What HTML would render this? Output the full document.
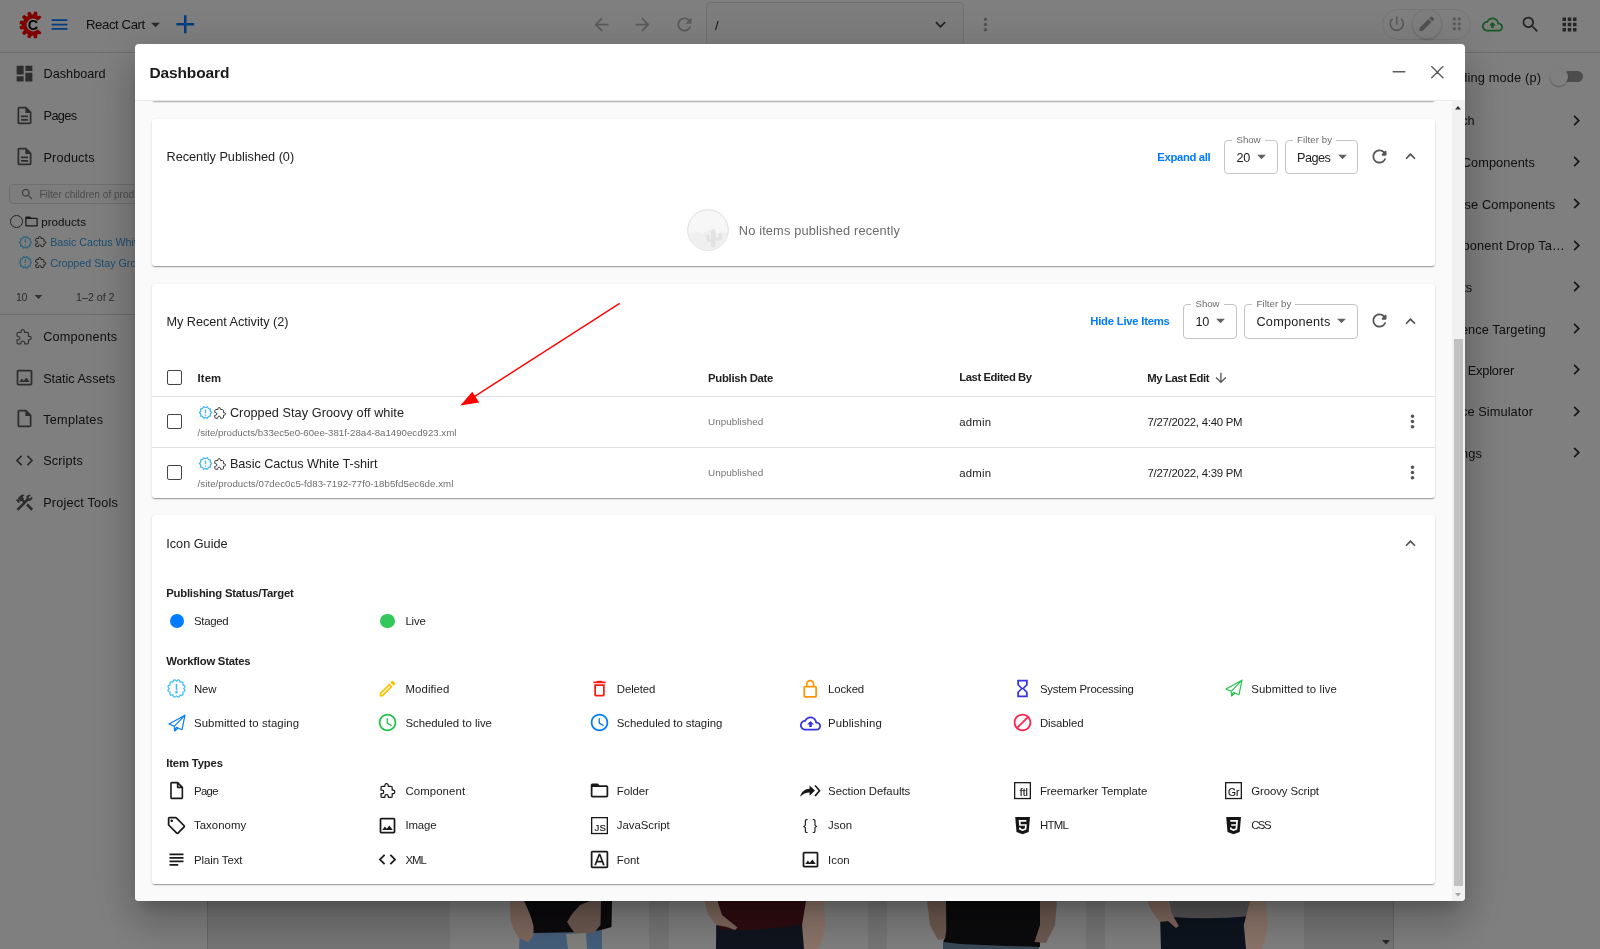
<!DOCTYPE html>
<html lang="en">
<head>
<meta charset="utf-8">
<title>Dashboard</title>
<style>
*{box-sizing:border-box}
html,body{margin:0;padding:0}
body{width:1600px;height:949px;overflow:hidden;position:relative;background:#fff;font-family:"Liberation Sans",sans-serif;color:#212121;font-size:13px}
.abs{position:absolute}
.t{position:absolute;white-space:nowrap;line-height:1;color:#212121}
svg{display:block;position:absolute;overflow:visible}
#app{position:absolute;left:0;top:0;width:1600px;height:949px;background:#fff;overflow:hidden;will-change:transform}
#overlay{position:absolute;left:0;top:0;width:1600px;height:949px;background:rgba(0,0,0,.5)}
#photos{position:absolute;left:0;top:901px;width:1600px;height:48px;overflow:hidden}
#dlg{position:absolute;left:135px;top:44px;width:1330px;height:857px;background:#fff;border-radius:4px;overflow:hidden;
box-shadow:0 11px 15px -7px rgba(0,0,0,.2),0 24px 38px 3px rgba(0,0,0,.14),0 9px 46px 8px rgba(0,0,0,.12)}
#dlgin{position:absolute;left:-135px;top:-44px;width:1600px;height:949px;will-change:transform}
#dlgbody{position:absolute;left:135px;top:100px;width:1330px;height:801px;background:#fafafa;border-top:1px solid #e8e8e8}
.card{position:absolute;left:152px;width:1283px;background:#fff;border-radius:3px;box-shadow:0 2px 1px -1px rgba(0,0,0,.2),0 1px 1px 0 rgba(0,0,0,.14),0 1px 3px 0 rgba(0,0,0,.12)}
.hl{position:absolute;left:152px;width:1283px;height:1px;background:#e0e0e0}
.cb{position:absolute;width:15.2px;height:15.2px;border:1.6px solid #454545;border-radius:2px;background:#fff}
.sel{position:absolute;border:1px solid #c4c4c4;border-radius:4px;background:#fff}
.lbl{background:#fff;padding:0 4px;color:#666}
</style>
</head>
<body>
<div id="app">
<div class="abs" style="left:0.0px;top:0.0px;width:1600.0px;height:52.5px;background:#fff;border-bottom:1px solid #dcdcdc"></div>
<svg width="40" height="40" viewBox="-20 -20 40 40" style="left:13.0px;top:4.5px"><path fill="#ff0000" d="M7.61 7.09 A10.4 10.4 0 1 1 7.61 -7.09 L4.68 -4.36 A6.4 6.4 0 1 0 4.68 4.36 Z"/><path fill="#ff0000" transform="rotate(78)" d="M9.4 -2.300 L13.5 -1.500 L13.5 1.500 L9.4 2.300 Z"/><path fill="#ff0000" transform="rotate(108)" d="M9.4 -2.300 L13.5 -1.500 L13.5 1.500 L9.4 2.300 Z"/><path fill="#ff0000" transform="rotate(138)" d="M9.4 -2.300 L13.5 -1.500 L13.5 1.500 L9.4 2.300 Z"/><path fill="#ff0000" transform="rotate(168)" d="M9.4 -2.300 L13.5 -1.500 L13.5 1.500 L9.4 2.300 Z"/><path fill="#ff0000" transform="rotate(192)" d="M9.4 -2.300 L13.5 -1.500 L13.5 1.500 L9.4 2.300 Z"/><path fill="#ff0000" transform="rotate(222)" d="M9.4 -2.300 L13.5 -1.500 L13.5 1.500 L9.4 2.300 Z"/><path fill="#ff0000" transform="rotate(252)" d="M9.4 -2.300 L13.5 -1.500 L13.5 1.500 L9.4 2.300 Z"/><path fill="#ff0000" transform="rotate(282)" d="M9.4 -2.300 L13.5 -1.500 L13.5 1.500 L9.4 2.300 Z"/><path fill="#ff0000" transform="rotate(43)" d="M8.4 0 L11.9 0 L11.200000000000001 2.500 L8.4 3 Z"/><path fill="#ff0000" transform="rotate(-43)" d="M8.4 0 L11.9 0 L11.200000000000001 -2.500 L8.4 -3 Z"/><text x="-0.100" y="4.700" text-anchor="middle" font-family="Liberation Sans, sans-serif" font-weight="700" font-size="14.400" fill="#000">C</text></svg>
<svg viewBox="0 0 24 24" width="21" height="21" style="left:49.1px;top:13.6px;fill:#007aff;"><path d="M3 18h18v-2H3v2zm0-5h18v-2H3v2zm0-7v2h18V6H3z"/></svg>
<div class="t" style="left:86.0px;top:18.2px;font-size:13.20px;letter-spacing:-0.419px;">React Cart</div>
<svg viewBox="0 0 24 24" width="21" height="21" style="left:145.3px;top:14.0px;fill:#555;"><path d="M7 10l5 5 5-5z"/></svg>
<svg viewBox="0 0 24 24" width="30.5" height="30.5" style="left:170.4px;top:9.4px;fill:#007aff;"><path d="M19 13h-6v6h-2v-6H5v-2h6V5h2v6h6v2z"/></svg>
<svg viewBox="0 0 24 24" width="21" height="21" style="left:590.5px;top:13.9px;fill:#b5b5b5;"><path d="M20 11H7.83l5.59-5.59L12 4l-8 8 8 8 1.41-1.41L7.83 13H20v-2z"/></svg>
<svg viewBox="0 0 24 24" width="21" height="21" style="left:631.7px;top:13.9px;fill:#b5b5b5;"><path d="M12 4l-1.41 1.41L16.17 11H4v2h12.17l-5.58 5.59L12 20l8-8z"/></svg>
<svg viewBox="0 0 24 24" width="21" height="21" style="left:673.7px;top:13.9px;fill:#b5b5b5;"><path d="M17.65 6.35C16.2 4.9 14.21 4 12 4c-4.42 0-7.99 3.58-7.99 8s3.57 8 7.99 8c3.73 0 6.84-2.55 7.73-6h-2.08c-.82 2.33-3.04 4-5.65 4-3.31 0-6-2.69-6-6s2.69-6 6-6c1.66 0 3.14.69 4.22 1.78L13 11h7V4l-2.35 2.35z"/></svg>
<div class="abs" style="left:705.6px;top:1.5px;width:258.7px;height:58.5px;border:1px solid #e2e2e2;border-radius:4px;background:#fbfbfb"></div>
<div class="t" style="left:715.0px;top:18.6px;font-size:13.00px;letter-spacing:0.088px;">/</div>
<svg viewBox="0 0 24 24" width="21" height="21" style="left:930.3px;top:13.9px;fill:#4a4a4a;"><path d="M16.59 8.59L12 13.17 7.41 8.59 6 10l6 6 6-6z"/></svg>
<svg viewBox="0 0 24 24" width="21" height="21" style="left:974.5px;top:13.8px;fill:#a6a6a6;"><path d="M12 8c1.1 0 2-.9 2-2s-.9-2-2-2-2 .9-2 2 .9 2 2 2zm0 2c-1.1 0-2 .9-2 2s.9 2 2 2 2-.9 2-2-.9-2-2-2zm0 6c-1.1 0-2 .9-2 2s.9 2 2 2 2-.9 2-2-.9-2-2-2z"/></svg>
<div class="abs" style="left:1382.2px;top:8.8px;width:89.1px;height:30.9px;border:1px solid #eaeaea;border-radius:16px;background:#fff"></div>
<svg viewBox="0 0 24 24" width="19.5" height="19.5" style="left:1387.2px;top:14.2px;fill:#b2b2b2;"><path d="M13 3h-2v10h2V3zm4.83 2.17l-1.42 1.42C17.99 7.86 19 9.81 19 12c0 3.870-3.130 7-7 7s-7-3.130-7-7c0-2.190 1.010-4.140 2.580-5.420L6.170 5.170C4.230 6.820 3 9.260 3 12c0 4.970 4.030 9 9 9s9-4.030 9-9c0-2.740-1.230-5.180-3.170-6.830z"/></svg>
<div class="abs" style="left:1411.5px;top:9.0px;width:30.0px;height:30.4px;border:1px solid #ececec;border-radius:50%;background:#fdfdfd;box-shadow:0 1px 2px rgba(0,0,0,.18)"></div>
<svg viewBox="0 0 24 24" width="19.5" height="19.5" style="left:1416.8px;top:14.2px;fill:#a2a2a2;"><path d="M3 17.25V21h3.750L17.81 9.94l-3.750-3.750L3 17.250zM20.710 7.040c.390-.390.390-1.020 0-1.410l-2.340-2.340c-.390-.390-1.020-.390-1.410 0l-1.830 1.830 3.750 3.750 1.830-1.830z"/></svg>
<svg viewBox="0 0 24 24" width="19.5" height="19.5" style="left:1446.5px;top:14.2px;fill:#b6b6b6;"><path d="M11 18c0 1.1-.9 2-2 2s-2-.9-2-2 .9-2 2-2 2 .9 2 2zm-2-8c-1.1 0-2 .9-2 2s.9 2 2 2 2-.9 2-2-.9-2-2-2zm0-6c-1.1 0-2 .9-2 2s.9 2 2 2 2-.9 2-2-.9-2-2-2zm6 4c1.1 0 2-.9 2-2s-.9-2-2-2-2 .9-2 2 .9 2 2 2zm0 2c-1.1 0-2 .9-2 2s.9 2 2 2 2-.9 2-2-.9-2-2-2zm0 6c-1.1 0-2 .9-2 2s.9 2 2 2 2-.9 2-2-.9-2-2-2z"/></svg>
<svg viewBox="0 0 24 24" width="21" height="21" style="left:1482.0px;top:13.5px;fill:#2fb24a;"><path d="M19.35 10.04C18.67 6.59 15.64 4 12 4 9.11 4 6.6 5.64 5.35 8.04 2.34 8.36 0 10.91 0 14c0 3.31 2.69 6 6 6h13c2.76 0 5-2.24 5-5 0-2.64-2.05-4.78-4.65-4.96zM19 18H6c-2.21 0-4-1.79-4-4 0-2.05 1.53-3.76 3.56-3.97l1.07-.11.5-.95C8.08 7.14 9.94 6 12 6c2.620 0 4.880 1.860 5.390 4.430l.3 1.5 1.530.110c1.560.1 2.780 1.410 2.780 2.960 0 1.650-1.350 3-3 3zM8 13h2.550v3h2.900v-3H16l-4-4z"/></svg>
<svg viewBox="0 0 24 24" width="21" height="21" style="left:1520.0px;top:13.7px;fill:#4a4a4a;"><path d="M15.5 14h-.79l-.28-.27C15.41 12.59 16 11.11 16 9.5 16 5.91 13.09 3 9.5 3S3 5.91 3 9.5 5.91 16 9.5 16c1.61 0 3.09-.59 4.23-1.57l.27.28v.79l5 4.99L20.49 19l-4.99-5zm-6 0C7.01 14 5 11.99 5 9.5S7.01 5 9.5 5 14 7.01 14 9.5 11.99 14 9.5 14z"/></svg>
<svg viewBox="0 0 24 24" width="21" height="21" style="left:1558.5px;top:13.7px;fill:#4a4a4a;"><path d="M4 8h4V4H4v4zm6 12h4v-4h-4v4zm-6 0h4v-4H4v4zm0-6h4v-4H4v4zm6 0h4v-4h-4v4zm6-10v4h4V4h-4zm-6 4h4V4h-4v4zm6 6h4v-4h-4v4zm0 6h4v-4h-4v4z"/></svg>
<div class="abs" style="left:0.0px;top:53.0px;width:208.0px;height:896.0px;background:#fff;border-right:1px solid #d2d2d2"></div>
<svg viewBox="0 0 24 24" width="21" height="21" style="left:13.7px;top:63.2px;fill:#5a5a5a;"><path d="M3 13h8V3H3v10zm0 8h8v-6H3v6zm10 0h8V11h-8v10zm0-18v6h8V3h-8z"/></svg>
<div class="t" style="left:43.5px;top:68.4px;font-size:12.70px;letter-spacing:0.008px;">Dashboard</div>
<svg viewBox="0 0 24 24" width="21" height="21" style="left:13.7px;top:104.6px;fill:#5a5a5a;"><path d="M8 16h8v2H8zm0-4h8v2H8zm6-10H6c-1.1 0-2 .9-2 2v16c0 1.1.89 2 1.99 2H18c1.1 0 2-.9 2-2V8l-6-6zm4 18H6V4h7v5h5v11z"/></svg>
<div class="t" style="left:43.5px;top:109.8px;font-size:12.70px;letter-spacing:-0.582px;">Pages</div>
<svg viewBox="0 0 24 24" width="21" height="21" style="left:13.7px;top:146.4px;fill:#5a5a5a;"><path d="M8 16h8v2H8zm0-4h8v2H8zm6-10H6c-1.1 0-2 .9-2 2v16c0 1.1.89 2 1.99 2H18c1.1 0 2-.9 2-2V8l-6-6zm4 18H6V4h7v5h5v11z"/></svg>
<div class="t" style="left:43.5px;top:151.6px;font-size:12.70px;letter-spacing:0.148px;">Products</div>
<div class="abs" style="left:8.8px;top:184.0px;width:206.2px;height:20.4px;border:1px solid #dedede;border-radius:4px;background:#fbfbfb"></div>
<svg viewBox="0 0 24 24" width="14.5" height="14.5" style="left:20.1px;top:187.2px;fill:#7c7c7c;"><path d="M15.5 14h-.79l-.28-.27C15.41 12.59 16 11.11 16 9.5 16 5.91 13.09 3 9.5 3S3 5.91 3 9.5 5.91 16 9.5 16c1.61 0 3.09-.59 4.23-1.57l.27.28v.79l5 4.99L20.49 19l-4.99-5zm-6 0C7.01 14 5 11.99 5 9.5S7.01 5 9.5 5 14 7.01 14 9.5 11.99 14 9.5 14z"/></svg>
<div class="t" style="left:39.4px;top:189.5px;font-size:10.10px;color:#9a9a9a;">Filter children of products</div>
<div class="abs" style="left:9.8px;top:215.3px;width:12.8px;height:12.8px;border:1.2px solid #444;border-radius:50%"></div>
<svg viewBox="0 0 24 24" width="15" height="15" style="left:23.9px;top:214.3px;fill:#333;"><path d="M20 6h-8l-2-2H4c-1.1 0-1.99.9-1.99 2L2 18c0 1.1.9 2 2 2h16c1.1 0 2-.9 2-2V8c0-1.1-.9-2-2-2zm0 12H4V8h16v10z"/></svg>
<div class="t" style="left:41.2px;top:216.1px;font-size:11.60px;letter-spacing:0.039px;">products</div>
<svg viewBox="0 0 24 24" width="14.8" height="14.8" style="left:17.6px;top:234.6px;fill:#5ac8fa;"><path d="M23 12l-2.44-2.78.34-3.68-3.61-.82-1.890-3.180L12 3 8.600 1.540 6.710 4.720l-3.610.810.340 3.680L1 12l2.440 2.780-.340 3.690 3.610.820 1.890 3.180L12 21l3.400 1.460 1.890-3.180 3.610-.820-.340-3.680L23 12zm-4.510 2.110l.260 2.790-2.740.620-1.430 2.410L12 18.820l-2.580 1.110-1.430-2.410-2.740-.620.260-2.800L3.660 12l1.850-2.120-.260-2.780 2.740-.610 1.430-2.410L12 5.180l2.580-1.110 1.430 2.410 2.740.620-.260 2.790L20.340 12l-1.850 2.110zM11 15h2v2h-2zm0-8h2v6h-2z"/></svg>
<svg viewBox="0.500 0 24 24" width="11.5" height="11.5" style="left:34.5px;top:236.2px;fill:none;stroke:#333;stroke-width:2.0;stroke-linejoin:round"><path d="M20.5 11H19V7c0-1.1-.9-2-2-2h-4V3.500C13 2.120 11.880 1 10.500 1S8 2.120 8 3.500V5H4c-1.100 0-1.990.9-1.990 2v3.800H3.500c1.490 0 2.700 1.210 2.700 2.700s-1.210 2.700-2.700 2.700H2V20c0 1.100.9 2 2 2h3.800v-1.500c0-1.490 1.210-2.700 2.700-2.700 1.490 0 2.700 1.210 2.700 2.700V22H17c1.100 0 2-.9 2-2v-4h1.500c1.380 0 2.500-1.120 2.500-2.500S21.880 11 20.500 11z"/></svg>
<div class="t" style="left:50.2px;top:236.9px;font-size:10.70px;color:#3a9be0;">Basic Cactus White T-shirt</div>
<svg viewBox="0 0 24 24" width="14.8" height="14.8" style="left:17.6px;top:255.4px;fill:#5ac8fa;"><path d="M23 12l-2.44-2.78.34-3.68-3.61-.82-1.890-3.180L12 3 8.600 1.540 6.710 4.720l-3.610.810.340 3.680L1 12l2.440 2.780-.340 3.690 3.610.820 1.890 3.180L12 21l3.400 1.460 1.890-3.180 3.610-.820-.340-3.680L23 12zm-4.510 2.110l.260 2.790-2.740.620-1.430 2.410L12 18.820l-2.580 1.110-1.430-2.410-2.740-.620.260-2.800L3.660 12l1.850-2.120-.260-2.780 2.740-.610 1.430-2.410L12 5.180l2.580-1.110 1.430 2.410 2.740.620-.260 2.790L20.340 12l-1.850 2.110zM11 15h2v2h-2zm0-8h2v6h-2z"/></svg>
<svg viewBox="0.500 0 24 24" width="11.5" height="11.5" style="left:34.5px;top:257.1px;fill:none;stroke:#333;stroke-width:2.0;stroke-linejoin:round"><path d="M20.5 11H19V7c0-1.1-.9-2-2-2h-4V3.500C13 2.120 11.880 1 10.500 1S8 2.120 8 3.500V5H4c-1.100 0-1.990.9-1.990 2v3.800H3.500c1.490 0 2.700 1.210 2.700 2.700s-1.210 2.700-2.700 2.700H2V20c0 1.100.9 2 2 2h3.800v-1.500c0-1.490 1.210-2.700 2.700-2.700 1.490 0 2.700 1.210 2.700 2.700V22H17c1.100 0 2-.9 2-2v-4h1.500c1.380 0 2.500-1.120 2.500-2.500S21.880 11 20.500 11z"/></svg>
<div class="t" style="left:50.2px;top:257.7px;font-size:10.70px;color:#3a9be0;">Cropped Stay Groovy off white</div>
<div class="t" style="left:16.0px;top:291.5px;font-size:10.60px;letter-spacing:-0.295px;color:#555;">10</div>
<svg viewBox="0 0 24 24" width="19" height="19" style="left:28.7px;top:287.0px;fill:#666;"><path d="M7 10l5 5 5-5z"/></svg>
<div class="t" style="left:76.1px;top:291.5px;font-size:10.60px;letter-spacing:0.011px;color:#555;">1–2 of 2</div>
<div class="abs" style="left:0.0px;top:314.0px;width:208.0px;height:1.0px;background:#dcdcdc"></div>
<svg viewBox="0.500 0 24 24" width="16.2" height="16.2" style="left:16.2px;top:328.8px;fill:none;stroke:#666;stroke-width:1.7;stroke-linejoin:round"><path d="M20.5 11H19V7c0-1.1-.9-2-2-2h-4V3.500C13 2.120 11.880 1 10.500 1S8 2.120 8 3.500V5H4c-1.100 0-1.990.9-1.990 2v3.800H3.500c1.490 0 2.700 1.210 2.700 2.700s-1.210 2.700-2.700 2.700H2V20c0 1.100.9 2 2 2h3.800v-1.500c0-1.490 1.210-2.700 2.700-2.700 1.490 0 2.700 1.210 2.700 2.700V22H17c1.100 0 2-.9 2-2v-4h1.500c1.380 0 2.500-1.120 2.500-2.500S21.880 11 20.500 11z"/></svg>
<div class="t" style="left:43.2px;top:330.9px;font-size:12.70px;letter-spacing:0.209px;">Components</div>
<svg viewBox="0 0 24 24" width="21" height="21" style="left:13.7px;top:367.1px;fill:#5a5a5a;"><path d="M19 5v14H5V5h14m0-2H5c-1.1 0-2 .9-2 2v14c0 1.1.9 2 2 2h14c1.1 0 2-.9 2-2V5c0-1.1-.9-2-2-2zm-4.86 8.86-3 3.87L9 13.14 6 17h12l-3.86-5.14z"/></svg>
<div class="t" style="left:43.2px;top:372.5px;font-size:12.70px;letter-spacing:-0.046px;">Static Assets</div>
<svg viewBox="0 0 24 24" width="21" height="21" style="left:13.7px;top:408.4px;fill:#5a5a5a;"><path d="M14 2H6c-1.1 0-1.99.9-1.99 2L4 20c0 1.1.89 2 1.99 2H18c1.1 0 2-.9 2-2V8l-6-6zM6 20V4h7v5h5v11H6z"/></svg>
<div class="t" style="left:43.2px;top:413.8px;font-size:12.70px;letter-spacing:0.246px;">Templates</div>
<svg viewBox="0 0 24 24" width="21" height="21" style="left:13.7px;top:450.0px;fill:#5a5a5a;"><path d="M9.4 16.6L4.8 12l4.6-4.6L8 6l-6 6 6 6 1.4-1.4zm5.2 0l4.6-4.6-4.6-4.6L16 6l6 6-6 6-1.4-1.4z"/></svg>
<div class="t" style="left:43.2px;top:455.4px;font-size:12.70px;letter-spacing:0.127px;">Scripts</div>
<svg viewBox="0 0 24 24" width="21" height="21" style="left:13.7px;top:491.6px;fill:#5a5a5a;"><path d="M13.78 15.3l6 6 2.110-2.160-6-6zm3.720-5.100c-.390 0-.810-.050-1.140-.190L4.970 21.400l-2.110-2.110 7.410-7.410-1.780-1.790-.720.700-1.430-1.400v2.860l-.7.7-3.520-3.560.7-.7h2.810l-1.400-1.410 3.560-3.560c1.170-1.170 3.050-1.170 4.220 0L9.890 5.740l1.430 1.430-.720.720 1.790 1.780 1.830-1.830c-.140-.330-.220-.750-.220-1.140 0-1.970 1.550-3.520 3.520-3.520.590 0 1.120.140 1.590.390l-2.670 2.670 1.500 1.500 2.670-2.670c.250.470.390.970.390 1.590-.020 1.950-1.570 3.540-3.500 3.540z"/></svg>
<div class="t" style="left:43.2px;top:497.0px;font-size:12.70px;letter-spacing:0.187px;">Project Tools</div>
<div class="abs" style="left:208.0px;top:53.0px;width:1185.0px;height:896.0px;background:#ececec"></div>
<div class="abs" style="left:450.0px;top:600.0px;width:199.0px;height:349.0px;background:#fff"></div>
<div class="abs" style="left:668.5px;top:600.0px;width:199.0px;height:349.0px;background:#fff"></div>
<div class="abs" style="left:887.0px;top:600.0px;width:199.0px;height:349.0px;background:#fff"></div>
<div class="abs" style="left:1105.0px;top:600.0px;width:199.0px;height:349.0px;background:#fff"></div>
<svg width="8" height="5" viewBox="0 0 8 5" style="left:1381.6px;top:940px;fill:#505050"><path d="M0 0h8L4 4.500z"/></svg>
<div class="abs" style="left:1393.0px;top:53.0px;width:207.0px;height:896.0px;background:#fff;border-left:1px solid #d2d2d2"></div>
<div class="t" style="left:1437.0px;top:71.6px;font-size:12.80px;letter-spacing:0.153px;">Padding mode (p)</div>
<div class="t" style="left:1435.0px;top:115.4px;font-size:12.80px;letter-spacing:-0.176px;">Search</div>
<svg viewBox="0 0 24 24" width="21" height="21" style="left:1565.8px;top:109.6px;fill:#2e2e2e;"><path d="M10 6L8.59 7.41 13.17 12l-4.58 4.590L10 18l6-6z"/></svg>
<div class="t" style="left:1435.0px;top:157.0px;font-size:12.80px;letter-spacing:0.078px;">Add Components</div>
<svg viewBox="0 0 24 24" width="21" height="21" style="left:1565.8px;top:151.2px;fill:#2e2e2e;"><path d="M10 6L8.59 7.41 13.17 12l-4.58 4.590L10 18l6-6z"/></svg>
<div class="t" style="left:1435.0px;top:198.7px;font-size:12.80px;letter-spacing:0.093px;">Browse Components</div>
<svg viewBox="0 0 24 24" width="21" height="21" style="left:1565.8px;top:192.9px;fill:#2e2e2e;"><path d="M10 6L8.59 7.41 13.17 12l-4.58 4.590L10 18l6-6z"/></svg>
<div class="t" style="left:1435.0px;top:240.3px;font-size:12.80px;letter-spacing:0.160px;">Component Drop Ta…</div>
<svg viewBox="0 0 24 24" width="21" height="21" style="left:1565.8px;top:234.5px;fill:#2e2e2e;"><path d="M10 6L8.59 7.41 13.17 12l-4.58 4.590L10 18l6-6z"/></svg>
<div class="t" style="left:1435.0px;top:282.0px;font-size:12.80px;letter-spacing:-0.252px;">Assets</div>
<svg viewBox="0 0 24 24" width="21" height="21" style="left:1565.8px;top:276.2px;fill:#2e2e2e;"><path d="M10 6L8.59 7.41 13.17 12l-4.58 4.590L10 18l6-6z"/></svg>
<div class="t" style="left:1435.0px;top:323.6px;font-size:12.80px;letter-spacing:0.075px;">Audience Targeting</div>
<svg viewBox="0 0 24 24" width="21" height="21" style="left:1565.8px;top:317.8px;fill:#2e2e2e;"><path d="M10 6L8.59 7.41 13.17 12l-4.58 4.590L10 18l6-6z"/></svg>
<div class="t" style="left:1435.0px;top:364.8px;font-size:12.80px;letter-spacing:-0.163px;">Page Explorer</div>
<svg viewBox="0 0 24 24" width="21" height="21" style="left:1565.8px;top:359.0px;fill:#2e2e2e;"><path d="M10 6L8.59 7.41 13.17 12l-4.58 4.590L10 18l6-6z"/></svg>
<div class="t" style="left:1435.0px;top:406.4px;font-size:12.80px;letter-spacing:0.078px;">Device Simulator</div>
<svg viewBox="0 0 24 24" width="21" height="21" style="left:1565.8px;top:400.6px;fill:#2e2e2e;"><path d="M10 6L8.59 7.41 13.17 12l-4.58 4.590L10 18l6-6z"/></svg>
<div class="t" style="left:1435.0px;top:448.0px;font-size:12.80px;letter-spacing:0.094px;">Settings</div>
<svg viewBox="0 0 24 24" width="21" height="21" style="left:1565.8px;top:442.2px;fill:#2e2e2e;"><path d="M10 6L8.59 7.41 13.17 12l-4.58 4.590L10 18l6-6z"/></svg>
<div class="abs" style="left:1563.0px;top:70.6px;width:20.0px;height:11.4px;background:#9a9a9a;border-radius:6px"></div>
<div class="abs" style="left:1550.3px;top:67.5px;width:18.0px;height:18.0px;background:#fff;border-radius:50%;box-shadow:0 1px 2px rgba(0,0,0,.3)"></div>
</div>
<div id="overlay"></div>
<div id="photos"><svg width="1600" height="48" viewBox="0 901 1600 48" style="left:0;top:0">
<path fill="#46607d" d="M520 929 L602 926 L602 949 L519 949Z"/><path fill="#0d0b0e" d="M510.600 901 L612 901 L611.500 927 Q600 931 585 932 L534 933 L520 930Z"/><path fill="#80695e" d="M510 901 L524 901 Q531 915 533.500 926 L533.500 936 L528 942 L519 938 Q512 928 510.500 920Z"/><path fill="#6e5b52" d="M567 922 L572 914 L580 905 L590 901 L601 901 L600.500 925 L594 933 L575 933.500 L571 928Z"/><path fill="#85837f" d="M566 934 L586 933 L587 949 L568 949Z"/><path fill="#10151f" d="M716.300 918 L811 918 L812 949 L716 949Z"/><path fill="#2f0d12" d="M717.500 901 L810 901 L810 923 Q770 931 730 930 L719 929Z"/><path fill="#80695e" d="M704.400 901 L717.500 901 L722 915 L737.500 927.500 L735 930 L727 927 L716 925 L708 915Z"/><path fill="#8d766b" d="M806 901 L824 901 L825 925 L822 940 L818 949 L804 949 L802 925Z"/><path fill="#3a4956" d="M943 940 L1039 942 L1039 949 L943 949Z"/><path fill="#0c0c0e" d="M945.600 901 L1040 901 L1040 947 Q1000 946 960 944 L944 942Z"/><path fill="#6e5b52" d="M927 901 L946 901 L946.300 930 L945 939 L938 940 L930 925Z"/><path fill="#6e5b52" d="M1040 901 L1057 901 L1055 925 L1046 943 L1034.500 942 L1040 925Z"/><path fill="#0e151f" d="M1160 915 L1246 915 L1250 949 L1161 949Z"/><path fill="#575557" d="M1168.800 901 L1253.800 901 L1252 916 Q1210 920 1172 917Z"/><path fill="#80695e" d="M1147.500 901 L1168 901 L1171 912 L1178.800 926 L1176 928 L1168 921 L1160 922 L1152 912Z"/><path fill="#8d766b" d="M1250 901 L1266 901 L1267.500 925 L1265 940 L1262 949 L1246 949 L1243.800 925Z"/></svg></div>
<div id="dlg"><div id="dlgin">
<div class="t" style="left:149.4px;top:64.9px;font-size:15.50px;letter-spacing:-0.107px;font-weight:700;color:#1a1a1a;">Dashboard</div>
<svg width="40" height="20" viewBox="1390 62 60 20" style="left:1390px;top:62px;width:60px;height:20px;fill:none;stroke:#5c5c5c;stroke-width:1.350;stroke-linecap:round"><path d="M1393.200 71.700H1404.800M1431.700 66.600L1442.900 77.800M1442.900 66.600L1431.700 77.800"/></svg>
<div id="dlgbody"></div>
<div class="abs" style="left:1452.0px;top:100.0px;width:13.0px;height:801.0px;background:#f1f1f1"></div>
<div class="abs" style="left:1453.5px;top:338.8px;width:9.7px;height:547.6px;background:#c1c1c1"></div>
<svg width="6" height="3.400" viewBox="0 0 7 4" style="left:1455.400px;top:105.800px;fill:#303030"><path d="M0 4h7L3.500 0z"/></svg>
<svg width="6" height="3.400" viewBox="0 0 7 4" style="left:1455.400px;top:892.800px;fill:#a3a3a3"><path d="M0 0h7L3.500 4z"/></svg>
<div class="abs" style="left:135px;top:100.5px;width:1317px;height:800.5px;overflow:hidden"><div class="abs" style="left:-135px;top:-100.5px;width:1600px;height:949px">
<div class="card" style="top:60px;height:41.100px;box-shadow:0 1px 1.500px rgba(0,0,0,.34)"></div>
<div class="card" style="top:118.6px;height:147.2px"></div>
<div class="t" style="left:166.5px;top:151.1px;font-size:12.70px;">Recently Published (0)</div>
<div class="t" style="left:1157.3px;top:151.8px;font-size:11.30px;letter-spacing:-0.352px;font-weight:700;color:#007aff;">Expand all</div>
<div class="sel" style="left:1224.4px;top:139.5px;width:53.4px;height:34.9px"></div>
<div class="abs" style="left:1232.4px;top:138.5px;width:32.2px;height:3.0px;background:#fff"></div>
<div class="t" style="left:1236.6px;top:134.5px;font-size:9.70px;letter-spacing:-0.116px;color:#6a6a6a;">Show</div>
<div class="t" style="left:1236.6px;top:151.9px;font-size:12.70px;letter-spacing:-0.513px;">20</div>
<svg viewBox="0 0 24 24" width="21" height="21" style="left:1250.9px;top:145.6px;fill:#616161;"><path d="M7 10l5 5 5-5z"/></svg>
<div class="sel" style="left:1285.0px;top:139.5px;width:73.4px;height:34.9px"></div>
<div class="abs" style="left:1292.8px;top:138.5px;width:43.6px;height:3.0px;background:#fff"></div>
<div class="t" style="left:1297.0px;top:134.5px;font-size:9.70px;letter-spacing:0.078px;color:#6a6a6a;">Filter by</div>
<div class="t" style="left:1297.0px;top:151.9px;font-size:12.70px;letter-spacing:-0.542px;">Pages</div>
<svg viewBox="0 0 24 24" width="21" height="21" style="left:1331.5px;top:145.6px;fill:#616161;"><path d="M7 10l5 5 5-5z"/></svg>
<svg viewBox="0 0 24 24" width="21" height="21" style="left:1368.5px;top:145.6px;fill:#555;"><path d="M17.65 6.35c-1.63-1.63-3.94-2.57-6.48-2.31-3.67.37-6.69 3.35-7.1 7.02C3.52 15.81 7.27 20 12 20c3.19 0 5.93-1.87 7.21-4.56.32-.67-.16-1.44-.9-1.44-.37 0-.72.2-.88.53-1.13 2.43-3.84 3.97-6.8 3.31-2.22-.49-4.01-2.3-4.48-4.52C5.31 9.44 8.26 6 12 6c1.66 0 3.14.69 4.22 1.78l-1.51 1.51c-.63.63-.19 1.71.7 1.71H19c.55 0 1-.45 1-1V6.41c0-.89-1.08-1.34-1.71-.71l-.64.65z"/></svg>
<svg viewBox="0 0 24 24" width="21" height="21" style="left:1399.9px;top:146.1px;fill:#555;"><path d="M11.29 8.71 6.7 13.3c-.39.39-.39 1.02 0 1.41.39.39 1.02.39 1.41 0L12 10.83l3.88 3.88c.39.39 1.02.39 1.41 0 .39-.39.39-1.02 0-1.41L12.7 8.71c-.38-.39-1.02-.39-1.41 0z"/></svg>
<svg width="42" height="42" viewBox="0 0 42 42" style="left:686.8px;top:208.8px"><defs><clipPath id="cc"><circle cx="21" cy="21" r="20"/></clipPath></defs><circle cx="21" cy="21" r="20.3" fill="#f7f7f7" stroke="#dedede" stroke-width="1"/><g clip-path="url(#cc)"><path d="M0 27 L9 22 L15 25 L22 21 L30 25 L36 22 L42 26 L42 42 L0 42Z" fill="#efefef"/><path d="M24 38 V22.500 a2.300 2.300 0 0 1 4.600 0 V38Z M19.500 27 a1.600 1.600 0 0 1 3.200 0 v3 h2 v3 h-3 a2.200 2.200 0 0 1 -2.200 -2.200Z M32 25.500 a1.500 1.500 0 0 1 3 0 v3.800 a2.200 2.200 0 0 1 -2.200 2.200 h-4 v-3 h3.200Z" fill="#e2e2e2"/></g></svg>
<div class="t" style="left:738.8px;top:225.2px;font-size:12.80px;letter-spacing:0.147px;color:#6b6b6b;">No items published recently</div>
<div class="card" style="top:283.6px;height:214px"></div>
<div class="t" style="left:166.5px;top:315.5px;font-size:12.70px;letter-spacing:-0.036px;">My Recent Activity (2)</div>
<div class="t" style="left:1090.3px;top:316.2px;font-size:11.30px;letter-spacing:-0.240px;font-weight:700;color:#007aff;">Hide Live Items</div>
<div class="sel" style="left:1183.4px;top:303.9px;width:53.5px;height:34.9px"></div>
<div class="abs" style="left:1191.4px;top:302.9px;width:32.2px;height:3.0px;background:#fff"></div>
<div class="t" style="left:1195.6px;top:298.9px;font-size:9.70px;letter-spacing:-0.116px;color:#6a6a6a;">Show</div>
<div class="t" style="left:1195.6px;top:316.3px;font-size:12.70px;letter-spacing:-0.363px;">10</div>
<svg viewBox="0 0 24 24" width="21" height="21" style="left:1210.3px;top:310.0px;fill:#616161;"><path d="M7 10l5 5 5-5z"/></svg>
<div class="sel" style="left:1244.1px;top:303.9px;width:114.2px;height:34.9px"></div>
<div class="abs" style="left:1252.3px;top:302.9px;width:43.2px;height:3.0px;background:#fff"></div>
<div class="t" style="left:1256.5px;top:298.9px;font-size:9.70px;letter-spacing:0.034px;color:#6a6a6a;">Filter by</div>
<div class="t" style="left:1256.5px;top:316.3px;font-size:12.70px;letter-spacing:0.209px;">Components</div>
<svg viewBox="0 0 24 24" width="21" height="21" style="left:1331.1px;top:310.0px;fill:#616161;"><path d="M7 10l5 5 5-5z"/></svg>
<svg viewBox="0 0 24 24" width="21" height="21" style="left:1368.5px;top:310.0px;fill:#555;"><path d="M17.65 6.35c-1.63-1.63-3.94-2.57-6.48-2.31-3.67.37-6.69 3.35-7.1 7.02C3.52 15.81 7.27 20 12 20c3.19 0 5.93-1.87 7.21-4.56.32-.67-.16-1.44-.9-1.44-.37 0-.72.2-.88.53-1.13 2.43-3.84 3.97-6.8 3.31-2.22-.49-4.01-2.3-4.48-4.52C5.31 9.44 8.26 6 12 6c1.66 0 3.14.69 4.22 1.78l-1.51 1.51c-.63.63-.19 1.71.7 1.71H19c.55 0 1-.45 1-1V6.41c0-.89-1.08-1.34-1.71-.71l-.64.65z"/></svg>
<svg viewBox="0 0 24 24" width="21" height="21" style="left:1399.9px;top:310.5px;fill:#555;"><path d="M11.29 8.71 6.7 13.3c-.39.39-.39 1.02 0 1.41.39.39 1.02.39 1.41 0L12 10.83l3.88 3.88c.39.39 1.02.39 1.41 0 .39-.39.39-1.02 0-1.41L12.7 8.71c-.38-.39-1.02-.39-1.41 0z"/></svg>
<div class="cb" style="left:167.1px;top:369.8px"></div>
<div class="t" style="left:197.6px;top:373.0px;font-size:11.30px;letter-spacing:0.091px;font-weight:700;">Item</div>
<div class="t" style="left:708.1px;top:373.0px;font-size:11.30px;letter-spacing:-0.295px;font-weight:700;">Publish Date</div>
<div class="t" style="left:959.3px;top:372.3px;font-size:11.30px;letter-spacing:-0.435px;font-weight:700;">Last Edited By</div>
<div class="t" style="left:1147.3px;top:373.0px;font-size:11.30px;letter-spacing:-0.404px;font-weight:700;">My Last Edit</div>
<svg viewBox="0 0 24 24" width="15.8" height="15.8" style="left:1213.1px;top:370.1px;fill:#555;"><path d="M20 12l-1.41-1.41L13 16.17V4h-2v12.17l-5.58-5.59L4 12l8 8 8-8z"/></svg>
<div class="hl" style="top:396px"></div>
<div class="cb" style="left:167.1px;top:414.0px"></div>
<svg viewBox="0 0 24 24" width="15" height="15" style="left:197.5px;top:404.7px;fill:#40b8f5;"><path d="M23 12l-2.44-2.78.34-3.68-3.61-.82-1.890-3.180L12 3 8.600 1.540 6.710 4.720l-3.610.810.340 3.680L1 12l2.440 2.780-.340 3.690 3.610.820 1.890 3.180L12 21l3.400 1.460 1.890-3.180 3.610-.820-.340-3.680L23 12zm-4.510 2.110l.260 2.790-2.740.620-1.430 2.410L12 18.820l-2.580 1.110-1.430-2.410-2.740-.620.260-2.800L3.660 12l1.850-2.120-.260-2.780 2.740-.610 1.430-2.410L12 5.180l2.580-1.110 1.430 2.410 2.740.620-.260 2.790L20.340 12l-1.850 2.110zM11 15h2v2h-2zm0-8h2v6h-2z"/></svg>
<svg viewBox="0.500 0 24 24" width="12.3" height="12.3" style="left:214.4px;top:406.7px;fill:none;stroke:#333;stroke-width:1.9;stroke-linejoin:round"><path d="M20.5 11H19V7c0-1.1-.9-2-2-2h-4V3.500C13 2.120 11.880 1 10.500 1S8 2.120 8 3.500V5H4c-1.100 0-1.990.9-1.990 2v3.800H3.500c1.490 0 2.700 1.210 2.700 2.700s-1.210 2.700-2.700 2.700H2V20c0 1.100.9 2 2 2h3.800v-1.500c0-1.490 1.210-2.700 2.700-2.700 1.490 0 2.700 1.210 2.700 2.700V22H17c1.100 0 2-.9 2-2v-4h1.500c1.380 0 2.500-1.120 2.500-2.500S21.880 11 20.500 11z"/></svg>
<div class="t" style="left:229.9px;top:407.0px;font-size:12.70px;letter-spacing:0.055px;">Cropped Stay Groovy off white</div>
<div class="t" style="left:197.6px;top:428.2px;font-size:9.70px;letter-spacing:-0.015px;color:#6e6e6e;">/site/products/b33ec5e0-60ee-381f-28a4-8a1490ecd923.xml</div>
<div class="t" style="left:708.1px;top:416.9px;font-size:9.91px;color:#757575;">Unpublished</div>
<div class="t" style="left:959.3px;top:417.1px;font-size:11.40px;letter-spacing:0.170px;">admin</div>
<div class="t" style="left:1147.4px;top:417.1px;font-size:11.40px;letter-spacing:-0.250px;">7/27/2022, 4:40 PM</div>
<svg viewBox="0 0 24 24" width="21" height="21" style="left:1401.5px;top:411.2px;fill:#555;"><path d="M12 8c1.1 0 2-.9 2-2s-.9-2-2-2-2 .9-2 2 .9 2 2 2zm0 2c-1.1 0-2 .9-2 2s.9 2 2 2 2-.9 2-2-.9-2-2-2zm0 6c-1.1 0-2 .9-2 2s.9 2 2 2 2-.9 2-2-.9-2-2-2z"/></svg>
<div class="cb" style="left:167.1px;top:465.0px"></div>
<svg viewBox="0 0 24 24" width="15" height="15" style="left:197.5px;top:455.8px;fill:#40b8f5;"><path d="M23 12l-2.44-2.78.34-3.68-3.61-.82-1.890-3.180L12 3 8.600 1.540 6.710 4.720l-3.610.810.340 3.680L1 12l2.440 2.780-.340 3.690 3.610.820 1.890 3.180L12 21l3.400 1.460 1.890-3.180 3.610-.820-.340-3.680L23 12zm-4.510 2.110l.260 2.790-2.740.620-1.430 2.410L12 18.820l-2.580 1.110-1.430-2.410-2.740-.620.260-2.800L3.660 12l1.850-2.120-.260-2.780 2.740-.610 1.430-2.410L12 5.180l2.580-1.110 1.430 2.410 2.740.620-.260 2.790L20.340 12l-1.850 2.110zM11 15h2v2h-2zm0-8h2v6h-2z"/></svg>
<svg viewBox="0.500 0 24 24" width="12.3" height="12.3" style="left:214.4px;top:457.8px;fill:none;stroke:#333;stroke-width:1.9;stroke-linejoin:round"><path d="M20.5 11H19V7c0-1.1-.9-2-2-2h-4V3.500C13 2.120 11.880 1 10.500 1S8 2.120 8 3.500V5H4c-1.100 0-1.990.9-1.990 2v3.800H3.500c1.490 0 2.700 1.210 2.700 2.700s-1.210 2.700-2.700 2.700H2V20c0 1.100.9 2 2 2h3.800v-1.500c0-1.490 1.210-2.700 2.700-2.700 1.490 0 2.700 1.210 2.700 2.700V22H17c1.100 0 2-.9 2-2v-4h1.500c1.380 0 2.500-1.120 2.500-2.500S21.880 11 20.500 11z"/></svg>
<div class="t" style="left:229.9px;top:458.1px;font-size:12.70px;letter-spacing:-0.038px;">Basic Cactus White T-shirt</div>
<div class="t" style="left:197.6px;top:479.2px;font-size:9.70px;letter-spacing:0.039px;color:#6e6e6e;">/site/products/07dec0c5-fd83-7192-77f0-18b5fd5ec6de.xml</div>
<div class="t" style="left:708.1px;top:467.9px;font-size:9.91px;color:#757575;">Unpublished</div>
<div class="t" style="left:959.3px;top:468.1px;font-size:11.40px;letter-spacing:0.170px;">admin</div>
<div class="t" style="left:1147.4px;top:468.1px;font-size:11.40px;letter-spacing:-0.250px;">7/27/2022, 4:39 PM</div>
<svg viewBox="0 0 24 24" width="21" height="21" style="left:1401.5px;top:462.2px;fill:#555;"><path d="M12 8c1.1 0 2-.9 2-2s-.9-2-2-2-2 .9-2 2 .9 2 2 2zm0 2c-1.1 0-2 .9-2 2s.9 2 2 2 2-.9 2-2-.9-2-2-2zm0 6c-1.1 0-2 .9-2 2s.9 2 2 2 2-.9 2-2-.9-2-2-2z"/></svg>
<div class="hl" style="top:447.2px"></div>
<svg width="200" height="130" viewBox="440 290 200 130" style="left:440px;top:290px"><path d="M619.700 303.400 L470 399.400" stroke="#ff0000" stroke-width="1.300" fill="none"/><path d="M460.300 405.600 L472.300 391.800 L479.200 402.400Z" fill="#ff0000"/></svg>
<div class="card" style="top:514.8px;height:369.4px"></div>
<div class="t" style="left:166.2px;top:538.1px;font-size:12.70px;letter-spacing:0.008px;">Icon Guide</div>
<svg viewBox="0 0 24 24" width="21" height="21" style="left:1399.9px;top:532.5px;fill:#555;"><path d="M11.29 8.71 6.7 13.3c-.39.39-.39 1.02 0 1.41.39.39 1.02.39 1.41 0L12 10.83l3.88 3.88c.39.39 1.02.39 1.41 0 .39-.39.39-1.02 0-1.41L12.7 8.71c-.38-.39-1.02-.39-1.41 0z"/></svg>
<div class="t" style="left:166.2px;top:588.4px;font-size:11.30px;letter-spacing:-0.198px;font-weight:700;">Publishing Status/Target</div>
<div class="abs" style="left:169.5px;top:613.6px;width:14.2px;height:14.2px;background:#007aff;border-radius:50%"></div>
<div class="t" style="left:194.0px;top:615.8px;font-size:11.40px;letter-spacing:-0.289px;">Staged</div>
<div class="abs" style="left:380.4px;top:613.6px;width:14.2px;height:14.2px;background:#34c759;border-radius:50%"></div>
<div class="t" style="left:405.4px;top:615.8px;font-size:11.40px;letter-spacing:-0.153px;">Live</div>
<div class="t" style="left:166.2px;top:655.9px;font-size:11.30px;letter-spacing:-0.233px;font-weight:700;">Workflow States</div>
<svg width="21" height="21" viewBox="-10.5 -10.5 21 21" style="left:165.9px;top:677.6px;fill:none;stroke:#3fbcf7;stroke-width:1.25;stroke-linejoin:round;stroke-linecap:round"><path d="M0.00 -7.30Q2.76 -10.29 3.65 -6.33Q7.53 -7.53 6.33 -3.65Q10.29 -2.76 7.30 0.00Q10.29 2.76 6.33 3.65Q7.53 7.53 3.65 6.33Q2.76 10.29 0.00 7.30Q-2.76 10.29 -3.65 6.33Q-7.53 7.53 -6.33 3.65Q-10.29 2.76 -7.30 0.00Q-10.29 -2.76 -6.33 -3.65Q-7.53 -7.53 -3.65 -6.33Q-2.76 -10.29 -0.00 -7.30Z"/><path d="M0 -3.99V1.14" style="stroke-width:1.5625"/><circle cx="0" cy="3.80" r="0.69" fill="#3fbcf7"/></svg>
<div class="t" style="left:194.0px;top:683.5px;font-size:11.40px;letter-spacing:-0.169px;">New</div>
<svg viewBox="0 0 24 24" width="21" height="21" style="left:377.4px;top:677.8px;fill:#ffc107;"><path d="M14.06 9.02l.92.92L5.920 19H5v-.920l9.060-9.060M17.660 3c-.250 0-.510.100-.700.290l-1.830 1.830 3.750 3.750 1.830-1.830c.390-.390.390-1.020 0-1.410l-2.340-2.340c-.200-.200-.450-.290-.710-.290zm-3.600 3.190L3 17.250V21h3.750L17.810 9.940l-3.750-3.750z"/></svg>
<div class="t" style="left:405.4px;top:683.5px;font-size:11.40px;letter-spacing:0.114px;">Modified</div>
<svg viewBox="0 0 24 24" width="21" height="21" style="left:588.7px;top:677.8px;fill:#ff1a12;"><path d="M6 19c0 1.1.9 2 2 2h8c1.1 0 2-.9 2-2V7H6v12zM8 9h8v10H8V9zm7.5-5l-1-1h-5l-1 1H5v2h14V4h-3.5z"/></svg>
<div class="t" style="left:616.8px;top:683.5px;font-size:11.40px;letter-spacing:-0.113px;">Deleted</div>
<svg viewBox="0 0 24 24" width="20.4" height="20.4" style="left:800.3px;top:678.6px;fill:#ff9500;"><path d="M18 8h-1V6c0-2.76-2.24-5-5-5S7 3.24 7 6v2H6c-1.1 0-2 .9-2 2v10c0 1.1.9 2 2 2h12c1.1 0 2-.9 2-2V10c0-1.1-.9-2-2-2zM9 6c0-1.66 1.34-3 3-3s3 1.340 3 3v2H9V6zm9 14H6V10h12v10z"/></svg>
<div class="t" style="left:828.1px;top:683.5px;font-size:11.40px;letter-spacing:-0.127px;">Locked</div>
<svg viewBox="0 0 24 24" width="21" height="21" style="left:1012.0px;top:677.8px;fill:#3535e2;"><path d="M6 2v6h.01L6 8.010 10 12l-4 4 .01.010H6V22h12v-5.990h-.01L18 16l-4-4 4-3.990-.01-.010H18V2H6zm10 14.500V20H8v-3.500l4-4 4 4zm-4-5l-4-4V4h8v3.500l-4 4z"/></svg>
<div class="t" style="left:1039.9px;top:683.5px;font-size:11.40px;letter-spacing:-0.222px;">System Processing</div>
<svg width="18" height="18" viewBox="0 0 18 18" style="left:1225.0px;top:679.0px;fill:none;stroke:#25c04f;stroke-width:1.150;stroke-linejoin:round;stroke-linecap:round"><path d="M17 1.200 L1 10 L6.200 12.300 L17 1.200 L14 15.700 L8.300 13.300 M6.200 12.300 L6.600 17 L8.300 13.300 M6.600 17 L10.200 14.100"/></svg>
<div class="t" style="left:1251.2px;top:683.5px;font-size:11.40px;letter-spacing:0.096px;">Submitted to live</div>
<svg width="18" height="18" viewBox="0 0 18 18" style="left:168.0px;top:713.9px;fill:none;stroke:#007aff;stroke-width:1.150;stroke-linejoin:round;stroke-linecap:round"><path d="M17 1.200 L1 10 L6.200 12.300 L17 1.200 L14 15.700 L8.300 13.300 M6.200 12.300 L6.600 17 L8.300 13.300 M6.600 17 L10.200 14.100"/></svg>
<div class="t" style="left:194.0px;top:718.1px;font-size:11.40px;letter-spacing:0.063px;">Submitted to staging</div>
<svg viewBox="0 0 24 24" width="21" height="21" style="left:377.4px;top:712.4px;fill:#25c04f;"><path d="M11.99 2C6.47 2 2 6.48 2 12s4.47 10 9.99 10C17.52 22 22 17.52 22 12S17.52 2 11.99 2zM12 20c-4.42 0-8-3.58-8-8s3.580-8 8-8 8 3.580 8 8-3.580 8-8 8zm.5-13H11v6l5.250 3.150.750-1.230-4.500-2.670z"/></svg>
<div class="t" style="left:405.4px;top:718.1px;font-size:11.40px;letter-spacing:-0.013px;">Scheduled to live</div>
<svg viewBox="0 0 24 24" width="21" height="21" style="left:588.7px;top:712.4px;fill:#007aff;"><path d="M11.99 2C6.47 2 2 6.48 2 12s4.47 10 9.99 10C17.52 22 22 17.52 22 12S17.52 2 11.99 2zM12 20c-4.42 0-8-3.58-8-8s3.580-8 8-8 8 3.580 8 8-3.580 8-8 8zm.5-13H11v6l5.250 3.150.750-1.230-4.500-2.670z"/></svg>
<div class="t" style="left:616.8px;top:718.1px;font-size:11.40px;letter-spacing:-0.049px;">Scheduled to staging</div>
<svg viewBox="0 0 24 24" width="21" height="21" style="left:800.0px;top:712.8px;fill:#3535e2;"><path d="M19.35 10.04C18.67 6.59 15.64 4 12 4 9.11 4 6.6 5.64 5.35 8.04 2.34 8.36 0 10.91 0 14c0 3.31 2.69 6 6 6h13c2.76 0 5-2.24 5-5 0-2.64-2.05-4.78-4.65-4.96zM19 18H6c-2.21 0-4-1.79-4-4 0-2.05 1.53-3.76 3.56-3.97l1.07-.11.5-.95C8.08 7.14 9.94 6 12 6c2.620 0 4.880 1.860 5.390 4.430l.3 1.5 1.530.110c1.560.1 2.780 1.410 2.780 2.960 0 1.650-1.350 3-3 3zM8 13h2.550v3h2.900v-3H16l-4-4z"/></svg>
<div class="t" style="left:828.1px;top:718.1px;font-size:11.40px;letter-spacing:0.120px;">Publishing</div>
<svg viewBox="0 0 24 24" width="21" height="21" style="left:1012.0px;top:712.4px;fill:#ff1f4b;"><path d="M12 2C6.48 2 2 6.48 2 12s4.48 10 10 10 10-4.48 10-10S17.52 2 12 2zM4 12c0-4.42 3.58-8 8-8 1.850 0 3.550.630 4.900 1.690L5.690 16.900C4.630 15.550 4 13.850 4 12zm8 8c-1.850 0-3.550-.630-4.900-1.690L18.310 7.100C19.370 8.450 20 10.150 20 12c0 4.420-3.580 8-8 8z"/></svg>
<div class="t" style="left:1039.9px;top:718.1px;font-size:11.40px;letter-spacing:-0.095px;">Disabled</div>
<div class="t" style="left:166.2px;top:757.9px;font-size:11.30px;letter-spacing:-0.149px;font-weight:700;">Item Types</div>
<svg viewBox="0 0 24 24" width="21" height="21" style="left:165.9px;top:780.3px;fill:none;stroke:#1a1a1a;stroke-width:1.850;stroke-linejoin:round"><path d="M6.400 3H13.300L18.700 8.400V20.300a.7.7 0 0 1-.7.700H6.400a.7.7 0 0 1-.7-.700V3.700a.7.7 0 0 1 .7-.700zM13.300 3.200V8.400H18.500" /></svg>
<div class="t" style="left:194.0px;top:785.8px;font-size:11.40px;letter-spacing:-0.656px;">Page</div>
<svg viewBox="0.500 0 24 24" width="15.8" height="15.8" style="left:380.2px;top:782.9px;fill:none;stroke:#1a1a1a;stroke-width:1.9;stroke-linejoin:round"><path d="M20.5 11H19V7c0-1.1-.9-2-2-2h-4V3.500C13 2.120 11.880 1 10.500 1S8 2.120 8 3.500V5H4c-1.100 0-1.990.9-1.990 2v3.800H3.500c1.490 0 2.700 1.210 2.700 2.700s-1.210 2.700-2.700 2.700H2V20c0 1.100.9 2 2 2h3.800v-1.500c0-1.490 1.210-2.700 2.700-2.700 1.490 0 2.700 1.210 2.700 2.700V22H17c1.100 0 2-.9 2-2v-4h1.500c1.380 0 2.500-1.120 2.500-2.500S21.880 11 20.500 11z"/></svg>
<div class="t" style="left:405.4px;top:785.8px;font-size:11.40px;letter-spacing:0.096px;">Component</div>
<svg viewBox="0 0 24 24" width="21" height="21" style="left:588.7px;top:780.1px;fill:#1a1a1a;"><path d="M20 6h-8l-2-2H4c-1.1 0-1.99.9-1.99 2L2 18c0 1.1.9 2 2 2h16c1.1 0 2-.9 2-2V8c0-1.1-.9-2-2-2zm0 12H4V8h16v10z"/></svg>
<div class="t" style="left:616.8px;top:785.8px;font-size:11.40px;letter-spacing:-0.052px;">Folder</div>
<svg width="21" height="13" viewBox="0 0 21 13" style="left:800.0px;top:784.7px;fill:#161616"><path d="M0 11.800 C1.500 6.500 4.800 3.900 9.600 3.700 L9.600 0.400 L15 5.600 L9.600 10.800 L9.600 7.400 C5.800 7.400 2.800 8.700 0 11.800Z"/><path d="M14.400 0.800 L15.700 0 L20.600 5.700 L15.700 11.400 L14.400 10.600 L18.500 5.700Z"/></svg>
<div class="t" style="left:828.1px;top:785.8px;font-size:11.40px;letter-spacing:-0.057px;">Section Defaults</div>
<svg width="17" height="17.200" viewBox="0 0 17 17.200" style="left:1014.0px;top:781.9px"><rect x="0.650" y="0.650" width="15.700" height="15.900" fill="none" stroke="#1a1a1a" stroke-width="1.300"/><text x="9.899999999999999" y="13.600000000000001" text-anchor="middle" font-family="Liberation Sans, sans-serif" font-size="10.4" fill="#1a1a1a" stroke="#1a1a1a" stroke-width="0.180">ftl</text></svg>
<div class="t" style="left:1039.9px;top:785.8px;font-size:11.40px;letter-spacing:-0.038px;">Freemarker Template</div>
<svg width="17" height="17.200" viewBox="0 0 17 17.200" style="left:1225.2px;top:781.9px"><rect x="0.650" y="0.650" width="15.700" height="15.900" fill="none" stroke="#1a1a1a" stroke-width="1.300"/><text x="8.7" y="13.600000000000001" text-anchor="middle" font-family="Liberation Sans, sans-serif" font-size="10.2" fill="#1a1a1a" stroke="#1a1a1a" stroke-width="0.180">Gr</text></svg>
<div class="t" style="left:1251.2px;top:785.8px;font-size:11.40px;letter-spacing:-0.096px;">Groovy Script</div>
<svg viewBox="0 0 24 24" width="21" height="21" style="left:165.9px;top:814.7px;fill:#1a1a1a;"><path d="M21.41 11.58l-9-9C12.05 2.22 11.55 2 11 2H4c-1.1 0-2 .9-2 2v7c0 .55.22 1.05.59 1.42l9 9c.36.36.86.58 1.41.58s1.05-.22 1.41-.59l7-7c.37-.36.59-.86.59-1.41s-.23-1.06-.59-1.42zM13 20.01L4 11V4h7v-.01l9 9-7 7.02zM6.5 5C5.67 5 5 5.67 5 6.5S5.67 8 6.500 8 8 7.330 8 6.5 7.330 5 6.5 5z"/></svg>
<div class="t" style="left:194.0px;top:820.4px;font-size:11.40px;letter-spacing:0.043px;">Taxonomy</div>
<svg viewBox="0 0 24 24" width="21" height="21" style="left:377.4px;top:814.7px;fill:#1a1a1a;"><path d="M19 5v14H5V5h14m0-2H5c-1.1 0-2 .9-2 2v14c0 1.1.9 2 2 2h14c1.1 0 2-.9 2-2V5c0-1.1-.9-2-2-2zm-4.86 8.86-3 3.87L9 13.14 6 17h12l-3.86-5.14z"/></svg>
<div class="t" style="left:405.4px;top:820.4px;font-size:11.40px;letter-spacing:-0.137px;">Image</div>
<svg width="17" height="17.200" viewBox="0 0 17 17.200" style="left:590.5px;top:816.6px"><rect x="0.650" y="0.650" width="15.700" height="15.900" fill="none" stroke="#1a1a1a" stroke-width="1.300"/><text x="9.2" y="13.9" text-anchor="middle" font-family="Liberation Sans, sans-serif" font-size="9.6" fill="#1a1a1a" stroke="#1a1a1a" stroke-width="0.180">JS</text></svg>
<div class="t" style="left:616.8px;top:820.4px;font-size:11.40px;letter-spacing:-0.022px;">JavaScript</div>
<div class="t" style="left:803.1px;top:817.5px;font-size:14.50px;letter-spacing:0.295px;">{ }</div>
<div class="t" style="left:828.1px;top:820.4px;font-size:11.40px;letter-spacing:-0.045px;">Json</div>
<svg width="15.200" height="17.200" viewBox="0 0 15.200 17.200" style="left:1014.9px;top:816.8px"><path d="M0.200 0 H15 L13.700 15 L7.600 17.200 L1.500 15Z" fill="#161616"/><path d="M11.300 3.800 H4.600 L4.950 8 H10.900 L10.550 12 L7.600 13 L4.900 12 L4.800 10.500" fill="none" stroke="#fff" stroke-width="1.700"/></svg>
<div class="t" style="left:1039.9px;top:820.4px;font-size:11.40px;letter-spacing:-0.708px;">HTML</div>
<svg width="15.200" height="17.200" viewBox="0 0 15.200 17.200" style="left:1226.1px;top:816.8px"><path d="M0.200 0 H15 L13.700 15 L7.600 17.200 L1.500 15Z" fill="#161616"/><path d="M4.300 3.800 H11.100 L10.750 8 H5.200 M10.750 8 L10.400 12 L7.600 13 L4.900 12 L4.800 10.500" fill="none" stroke="#fff" stroke-width="1.700"/></svg>
<div class="t" style="left:1251.2px;top:820.4px;font-size:11.40px;letter-spacing:-1.547px;">CSS</div>
<svg viewBox="0 0 24 24" width="21" height="21" style="left:165.9px;top:849.2px;fill:#1a1a1a;"><path d="M14 17H4v2h10v-2zm6-8H4v2h16V9zM4 15h16v-2H4v2zM4 5v2h16V5H4z"/></svg>
<div class="t" style="left:194.0px;top:854.9px;font-size:11.40px;letter-spacing:-0.072px;">Plain Text</div>
<svg viewBox="0 0 24 24" width="21" height="21" style="left:377.4px;top:849.2px;fill:#1a1a1a;"><path d="M9.4 16.6L4.8 12l4.6-4.6L8 6l-6 6 6 6 1.4-1.4zm5.2 0l4.6-4.6-4.6-4.6L16 6l6 6-6 6-1.4-1.4z"/></svg>
<div class="t" style="left:405.4px;top:854.9px;font-size:11.40px;letter-spacing:-1.047px;">XML</div>
<svg viewBox="0 0 24 24" width="21" height="21" style="left:588.7px;top:849.2px;fill:#1a1a1a;"><path d="M9.17 15.5h5.64l1.14 3h2.09l-5.11-13h-1.860l-5.110 13h2.090l1.120-3zM12 7.980l2.070 5.520H9.930L12 7.980zM20 2H4c-1.1 0-2 .9-2 2v16c0 1.1.9 2 2 2h16c1.1 0 2-.9 2-2V4c0-1.100-.9-2-2-2zm0 18H4V4h16v16z"/></svg>
<div class="t" style="left:616.8px;top:854.9px;font-size:11.40px;letter-spacing:-0.028px;">Font</div>
<svg viewBox="0 0 24 24" width="21" height="21" style="left:800.0px;top:849.2px;fill:#1a1a1a;"><path d="M19 5v14H5V5h14m0-2H5c-1.1 0-2 .9-2 2v14c0 1.1.9 2 2 2h14c1.1 0 2-.9 2-2V5c0-1.1-.9-2-2-2zm-4.86 8.86-3 3.87L9 13.14 6 17h12l-3.86-5.14z"/></svg>
<div class="t" style="left:828.1px;top:854.9px;font-size:11.40px;letter-spacing:-0.037px;">Icon</div>
</div></div>
</div></div>
</body>
</html>
